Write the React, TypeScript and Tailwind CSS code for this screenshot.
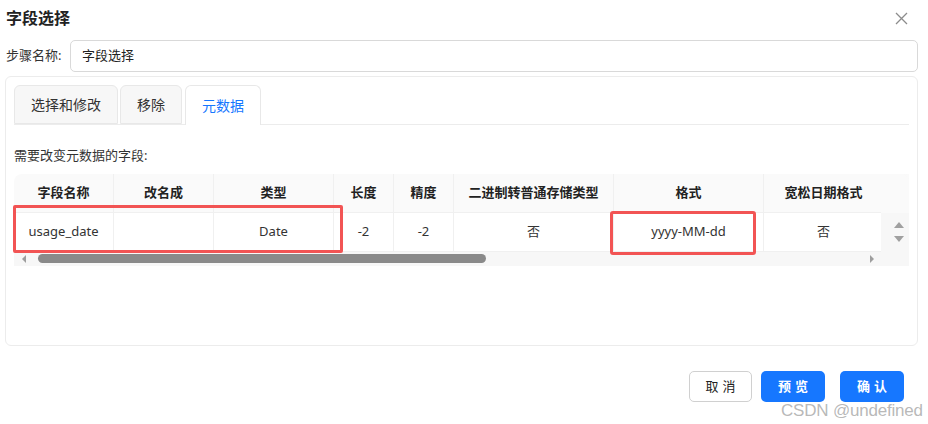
import React from "react";

const cols = [
  { label: "字段名称", w: "w-[100px]", value: "usage_date" },
  { label: "改名成", w: "w-[100px]", value: "" },
  { label: "类型", w: "w-[120px]", value: "Date" },
  { label: "长度", w: "w-[60px]", value: "-2" },
  { label: "精度", w: "w-[60px]", value: "-2" },
  { label: "二进制转普通存储类型", w: "w-[160px]", value: "否" },
  { label: "格式", w: "w-[150px]", value: "yyyy-MM-dd" },
  { label: "宽松日期格式", w: "w-[120px]", value: "否" },
];

const font = "font-['Noto_Sans','Noto_Sans_CJK_SC',sans-serif]";

function Tab({ label, active }: { label: string; active?: boolean }) {
  return (
    <div
      className={
        active
          ? "h-[40px] px-[16px] flex items-center border border-b-0 border-[#e8e8e8] rounded-t-[6px] bg-white text-[#1677ff] text-[14px] -mb-px relative ml-[1px]"
          : "h-[39px] px-[16px] flex items-center border border-[#e8e8e8] rounded-t-[6px] bg-[#f7f7f7] text-[#333] text-[14px]"
      }
    >
      {label}
    </div>
  );
}

export default function App() {
  return (
    <div className={`w-[928px] h-[424px] bg-white relative overflow-hidden ${font}`}>
      <div className="flex items-center justify-between pl-[6px] pr-[20px] h-[36px]">
        <span className="text-[16px] font-bold text-[#222]">字段选择</span>
        <svg width="13" height="13" viewBox="0 0 13 13" className="mt-[1px]">
          <path d="M1 1L12 12M12 1L1 12" stroke="#8c8c8c" strokeWidth="1.3" />
        </svg>
      </div>

      <div className="flex items-center pl-[6px] pr-[10px] mt-[4px]">
        <span className="text-[13px] text-[#333] w-[64px]">步骤名称:</span>
        <div className="flex-1 h-[32px] border border-[#d9d9d9] rounded-[5px] flex items-center px-[11px] text-[13px] text-[#222]">
          字段选择
        </div>
      </div>

      <div className="mx-[5px] mr-[10px] mt-[4px] h-[270px] border border-[#ececec] rounded-[6px] px-[8px] pt-[8px] flex flex-col">
        <div className="flex gap-[2px] border-b border-[#ececec] items-end">
          <Tab label="选择和修改" />
          <Tab label="移除" />
          <Tab label="元数据" active />
        </div>

        <div className="text-[13px] text-[#333] mt-[21px]">需要改变元数据的字段:</div>

        <div className="mt-[8px] relative">
          <div className="flex">
            <div className="w-[870px] rounded-tl-[8px] overflow-hidden">
              <div className="flex bg-[#fafafa] h-[39px] border-b border-[#f0f0f0]">
                {cols.map((c) => (
                  <div
                    key={c.label}
                    className={`${c.w} shrink-0 flex items-center justify-center text-[13px] font-bold text-[#222] border-r border-[#f0f0f0]`}
                  >
                    {c.label}
                  </div>
                ))}
              </div>
              <div className="flex h-[39px] border-b border-[#f0f0f0] bg-white">
                {cols.map((c) => (
                  <div
                    key={c.label}
                    className={`${c.w} shrink-0 flex items-center justify-center text-[13px] text-[#333] border-r border-[#f0f0f0]`}
                  >
                    {c.value}
                  </div>
                ))}
              </div>
              <div className="h-[14px] bg-[#f7f7f7] flex items-center">
                <svg width="24" height="14" viewBox="0 0 24 14">
                  <path d="M8 7L12 3V11Z" fill="#9e9e9e" />
                </svg>
                <div className="w-[448px] h-[9px] rounded-full bg-[#8a8a8a]" />
                <div className="flex-1" />
                <svg width="14" height="14" viewBox="0 0 14 14">
                  <path d="M3 3L7 7L3 11Z" fill="#9e9e9e" />
                </svg>
              </div>
            </div>
            <div className="w-[28px] bg-gradient-to-r from-[#f7f7f7] to-[#fafafa] flex flex-col">
              <div className="h-[39px] bg-[#fafafa] rounded-tr-[8px]" />
              <div className="h-[39px] flex flex-col items-start pl-[13px] justify-center gap-[8px] bg-[#f7f7f7]">
                <svg width="10" height="6" viewBox="0 0 10 6">
                  <path d="M0 6L5 0L10 6Z" fill="#a0a0a0" />
                </svg>
                <svg width="10" height="6" viewBox="0 0 10 6">
                  <path d="M0 0L5 6L10 0Z" fill="#a0a0a0" />
                </svg>
              </div>
              <div className="h-[14px] bg-[#f7f7f7]" />
            </div>
          </div>

          <div className="absolute left-[-1px] top-[31px] w-[330px] h-[48px] border-[3px] border-[#f25454] rounded-[2px]" />
          <div className="absolute left-[596px] top-[37px] w-[146px] h-[44px] border-[3px] border-[#f25454] rounded-[3px]" />
        </div>
      </div>

      <div className="flex justify-end pr-[24px] mt-[25px]">
        <div className="w-[63px] h-[31px] border border-[#d0d0d0] rounded-[5px] flex items-center justify-center text-[13px] text-[#222] tracking-[4px] pl-[4px]">
          取消
        </div>
        <div className="ml-[9px] w-[64px] h-[31px] bg-[#1677ff] rounded-[5px] flex items-center justify-center text-[13px] text-white font-bold tracking-[4px] pl-[4px]">
          预览
        </div>
        <div className="ml-[15px] w-[64px] h-[31px] bg-[#1677ff] rounded-[5px] flex items-center justify-center text-[13px] text-white font-bold tracking-[4px] pl-[4px]">
          确认
        </div>
      </div>

      <div className="absolute left-[781px] top-[398px] text-[17px] text-[#b0b0b0]/90 font-['Liberation_Sans',sans-serif] tracking-[-0.2px]">
        CSDN @undefined
      </div>
    </div>
  );
}
